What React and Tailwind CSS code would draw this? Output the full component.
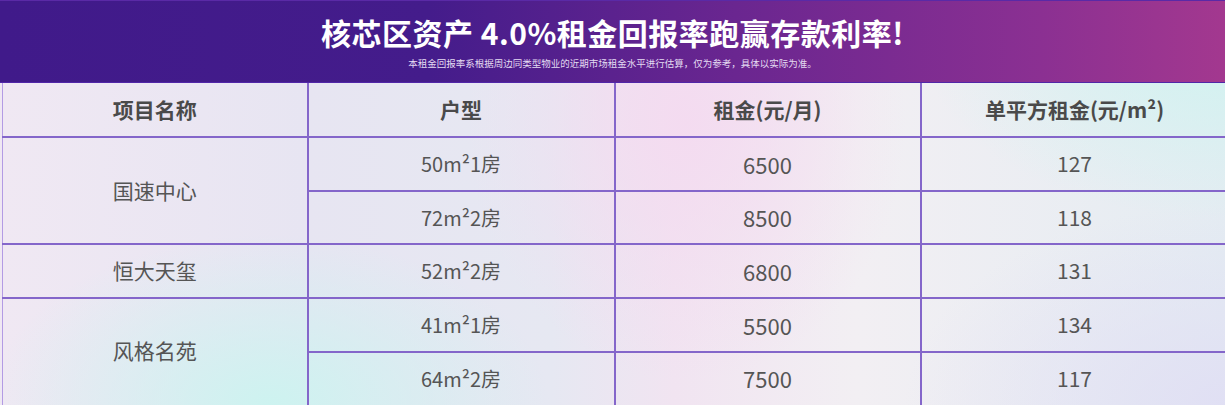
export default function App() {
  const rows = [
    { name: "国速中心", items: [["50m²1房", "6500", "127"], ["72m²2房", "8500", "118"]] },
    { name: "恒大天玺", items: [["52m²2房", "6800", "131"]] },
    { name: "风格名苑", items: [["41m²1房", "5500", "134"], ["64m²2房", "7500", "117"]] },
  ];
  const heights = [54, 53, 54, 54, 56];
  let idx = 0;
  const cell = "border-2 border-[#8466ca] text-center align-middle p-0";
  return (
    <div className="w-[1225px] h-[405px] overflow-hidden font-['Noto_Sans_CJK_SC','Noto_Sans',sans-serif] bg-[radial-gradient(ellipse_280px_170px_at_22%_100%,rgba(205,243,240,1),transparent),radial-gradient(ellipse_220px_260px_at_56%_30%,rgba(244,218,240,0.9),transparent),radial-gradient(ellipse_300px_170px_at_100%_12%,rgba(208,243,240,0.95),transparent),radial-gradient(ellipse_320px_200px_at_100%_100%,rgba(224,222,244,0.9),transparent),linear-gradient(90deg,#f0e8f3_0%,#e7e5f2_25%,#e6e8f2_45%,#f1e4f1_55%,#f2eff3_70%,#e4ecf2_100%)]">
      <div className="h-[82px] border-t border-[#5a2aa6] bg-[linear-gradient(90deg,#401a8a_0%,#441c8b_35%,#6a2690_60%,#8b3092_85%,#a3388f_100%)] flex flex-col items-center">
        <div className="mt-[13px] text-white font-bold text-[30px] leading-[36px] tracking-[0.5px]">
          核芯区资产 4.0%租金回报率跑赢存款利率!
        </div>
        <div className="mt-[7px] text-[#e4dcf2] text-[9.5px] leading-[12px]">
          本租金回报率系根据周边同类型物业的近期市场租金水平进行估算，仅为参考，具体以实际为准。
        </div>
      </div>
      <div className="h-px bg-[#5126a8]" />
      <table className="ml-[2px] w-[1226px] table-fixed border-collapse text-[#555555]">
        <colgroup>
          <col className="w-[305px]" />
          <col className="w-[307px]" />
          <col className="w-[306px]" />
          <col className="w-[308px]" />
        </colgroup>
        <thead>
          <tr className="h-[54px]">
            {["项目名称", "户型", "租金(元/月)", "单平方租金(元/m²)"].map((h, i) => (
              <th key={i} className={`${cell} border-t-0 ${i === 0 ? "border-l border-l-[#b39be4]" : ""} text-[21px] font-bold text-[#4a4a4a]`}>
                {h}
              </th>
            ))}
          </tr>
        </thead>
        <tbody>
          {rows.map((g) =>
            g.items.map((it, j) => {
              const h = heights[idx++];
              const last = idx === 5;
              return (
                <tr key={g.name + j} style={{ height: h }}>
                  {j === 0 && (
                    <td rowSpan={g.items.length} className={`${cell} border-l border-l-[#b39be4] text-[21px] ${g.items.length === 2 && g.name === "风格名苑" ? "pb-[4px]" : ""}`}>
                      {g.name}
                    </td>
                  )}
                  <td className={`${cell} text-[20px] ${last ? "pb-[3px]" : ""}`}>{it[0]}</td>
                  <td className={`${cell} text-[22px] ${last ? "pb-[3px]" : ""}`}>{it[1]}</td>
                  <td className={`${cell} text-[21px] ${last ? "pb-[3px]" : ""}`}>{it[2]}</td>
                </tr>
              );
            })
          )}
        </tbody>
      </table>
    </div>
  );
}
